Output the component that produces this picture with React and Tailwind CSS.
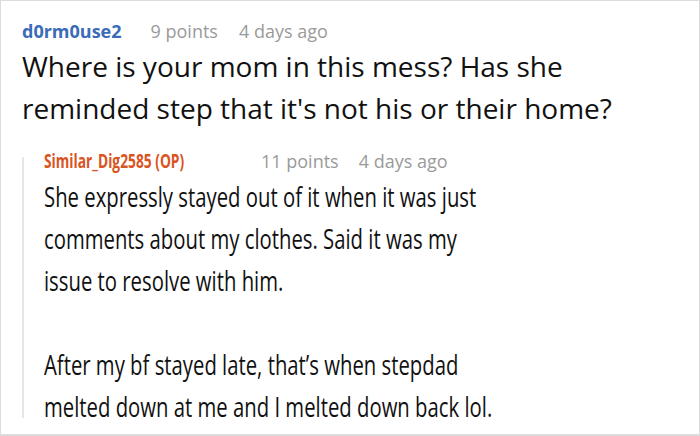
export default function App() {
  const font = { fontFamily: '"Open Sans", "Noto Sans", sans-serif' };
  return (
    <div className="w-[700px] h-[436px] bg-white border border-[#dcdcdc] border-b-2 overflow-hidden" style={font}>
      <div className="pl-[21px] pt-[18px]">
        <div className="flex items-baseline text-[18px] leading-[24px] h-[24px] whitespace-nowrap">
          <span className="font-bold text-[#3a6cb8]">d0rm0use2</span>
          <span className="ml-[29px] text-[#9a9a9a]">9 points</span>
          <span className="ml-[21px] text-[#9a9a9a]">4 days ago</span>
        </div>
        <div className="text-[28px] leading-[42px] text-[#111] mt-[2px]">
          <div className="whitespace-nowrap">Where is your mom in this mess? Has she</div>
          <div className="whitespace-nowrap">reminded step that it's not his or their home?</div>
        </div>
        <div className="mt-[20px] flex">
          <div className="w-[2px] bg-[#e6e6e6] mt-[8px] mb-[9px]"></div>
          <div className="pl-[20px]">
            <div className="flex items-baseline leading-[24px] h-[24px] whitespace-nowrap">
              <div className="w-[217px]">
                <span className="inline-block origin-left scale-x-[0.725] text-[19px] font-bold text-[#d9541e]">Similar_Dig2585 (OP)</span>
              </div>
              <span className="text-[18px] text-[#9a9a9a]">11 points</span>
              <span className="ml-[20px] text-[18px] text-[#9a9a9a]">4 days ago</span>
            </div>
            <div className="origin-left scale-x-[0.725] text-[28px] leading-[42px] text-[#111] mt-[2px]">
              <div className="whitespace-nowrap">She expressly stayed out of it when it was just</div>
              <div className="whitespace-nowrap">comments about my clothes. Said it was my</div>
              <div className="whitespace-nowrap">issue to resolve with him.</div>
              <div className="h-[42px]"></div>
              <div className="whitespace-nowrap">After my bf stayed late, that’s when stepdad</div>
              <div className="whitespace-nowrap">melted down at me and I melted down back lol.</div>
            </div>
          </div>
        </div>
      </div>
    </div>
  );
}
